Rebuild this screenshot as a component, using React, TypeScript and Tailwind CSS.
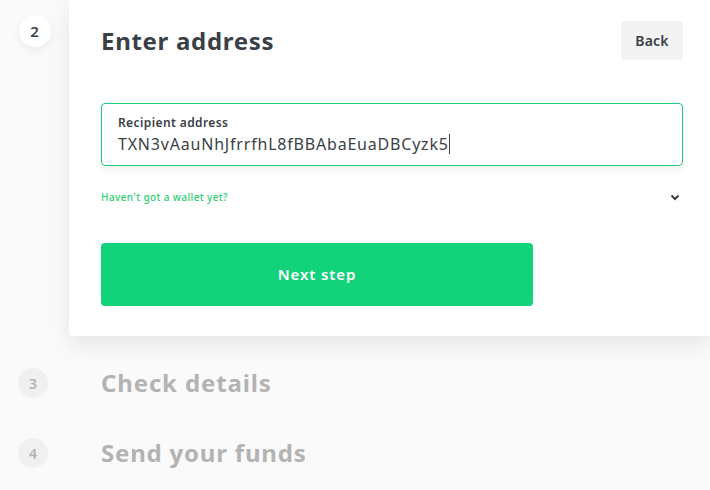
import React from "react";

const font = { fontFamily: '"Noto Sans", "Open Sans", sans-serif' };

export default function App() {
  return (
    <div className="w-[710px] h-[490px] bg-[#fafafa] overflow-hidden flex flex-col" style={font}>
      <div className="flex">
        <div className="w-[69px] shrink-0 flex justify-center pt-[15px]">
          <div className="w-[32px] h-[32px] rounded-full bg-white shadow-[0_4px_10px_rgba(0,0,0,0.06)] flex items-center justify-center text-[15px] font-semibold text-[#3a3f47]">
            2
          </div>
        </div>
        <div className="flex-1 h-[336px] bg-white rounded-bl-[4px] shadow-[0_8px_24px_rgba(0,0,0,0.09)] pl-[32px] pr-[27px] pt-[21px] flex flex-col">
          <div className="flex items-center justify-between h-[39px]">
            <h1 className="text-[24px] font-bold text-[#3a3f47] tracking-[0.7px] leading-none">Enter address</h1>
            <button className="w-[62px] h-[39px] rounded-[4px] bg-[#f3f3f3] text-[14px] font-semibold text-[#3a3f47] tracking-[0.2px]">
              Back
            </button>
          </div>
          <div className="mt-[43px] h-[63px] border border-[#1ecb7a] rounded-[4px] shadow-[0_5px_8px_rgba(0,0,0,0.06)] pl-[16px] pt-[11px] flex flex-col">
            <div className="text-[12px] font-semibold text-[#3a3f47] leading-[16px] tracking-[0.4px]">Recipient address</div>
            <div className="text-[16px] text-[#3a3f47] leading-[22px] mt-[2px] flex items-center tracking-[0.8px]">
              <span>TXN3vAauNhJfrrfhL8fBBAbaEuaDBCyzk5</span>
              <span className="inline-block w-px h-[20px] bg-[#3a3f47]" />
            </div>
          </div>
          <div className="mt-[23px] flex items-center justify-between h-[16px]">
            <span className="text-[10px] font-medium text-[#2ecf72] tracking-[0.4px]">Haven't got a wallet yet?</span>
            <svg width="10" height="8" viewBox="0 0 10 8" className="mr-[3px]">
              <path d="M1.5 2.5 L5 6 L8.5 2.5" stroke="#3a3f47" strokeWidth="2" fill="none" />
            </svg>
          </div>
          <button className="mt-[38px] w-[432px] h-[63px] rounded-[4px] bg-[#12d27a] text-white text-[15px] font-semibold tracking-[0.9px]">
            Next step
          </button>
        </div>
      </div>
      <div className="flex items-center mt-[31px] h-[32px]">
        <div className="w-[66px] shrink-0 flex justify-center">
          <div className="w-[30px] h-[30px] rounded-full bg-[#f0f0f0] flex items-center justify-center text-[14px] font-semibold text-[#b3b3b3]">
            3
          </div>
        </div>
        <div className="pl-[35px] text-[24px] font-bold text-[#b3b3b3] leading-none tracking-[0.85px]">Check details</div>
      </div>
      <div className="flex items-center mt-[38px] h-[32px]">
        <div className="w-[66px] shrink-0 flex justify-center">
          <div className="w-[30px] h-[30px] rounded-full bg-[#f0f0f0] flex items-center justify-center text-[14px] font-semibold text-[#b3b3b3]">
            4
          </div>
        </div>
        <div className="pl-[35px] text-[24px] font-bold text-[#b3b3b3] leading-none tracking-[0.8px]">Send your funds</div>
      </div>
    </div>
  );
}
